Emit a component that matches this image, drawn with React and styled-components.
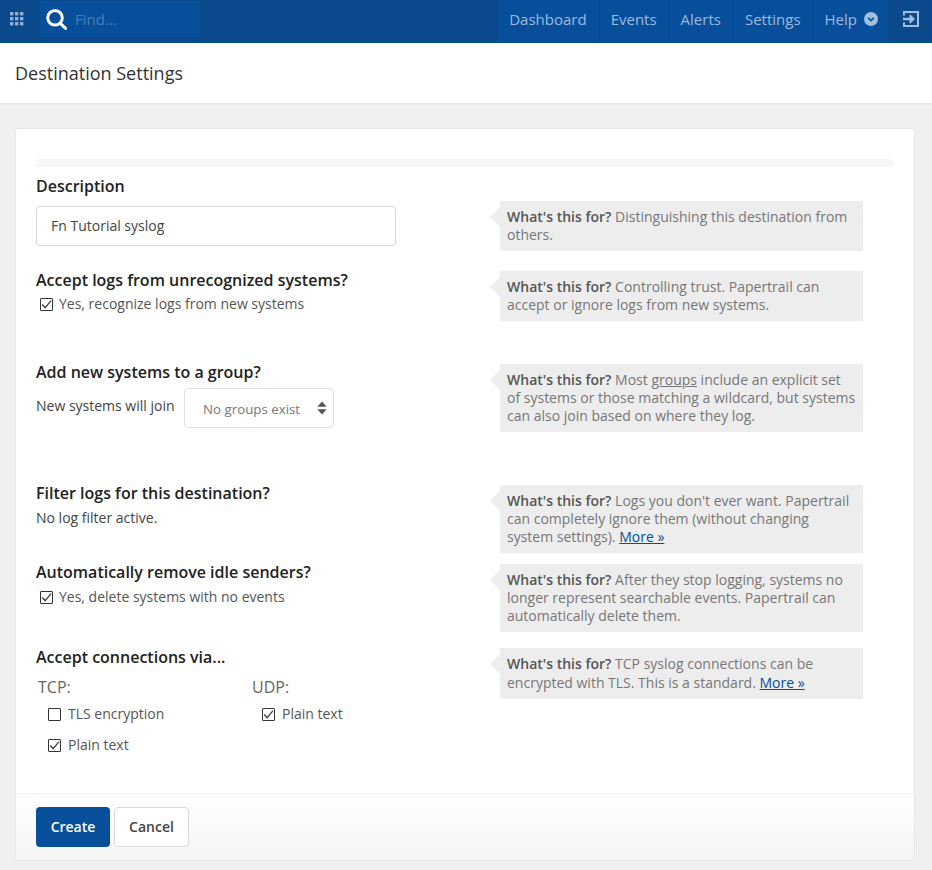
import React from "react";
import styled, { createGlobalStyle } from "styled-components";

const GlobalStyle = createGlobalStyle`
  html, body {
    margin: 0;
    padding: 0;
    background: #f0f0f0;
    font-family: "Open Sans", "Liberation Sans", sans-serif;
    font-size: 14px;
    color: #333;
  }
  * {
    box-sizing: border-box;
  }
`;

const App = () => {
  return (
    <Page>
      <GlobalStyle />
      <TopBar>
        <GridButton aria-label="apps">
          <GridIcon />
        </GridButton>
        <SearchBox>
          <SearchIcon />
          <SearchInput placeholder="Find..." />
        </SearchBox>
        <Spacer />
        <NavList>
          <NavItem>Dashboard</NavItem>
          <NavItem>Events</NavItem>
          <NavItem>Alerts</NavItem>
          <NavItem>Settings</NavItem>
          <NavItem>
            Help
            <HelpIcon />
          </NavItem>
        </NavList>
        <LogoutButton aria-label="log out">
          <LogoutIcon />
        </LogoutButton>
      </TopBar>

      <TitleBar>
        <Title>Destination Settings</Title>
      </TitleBar>

      <Card>
        <CardBody>
          <TopRule />
          <Row $height={94} $hintTop={25}>
            <div>
              <Label>Description</Label>
              <TextInput defaultValue="Fn Tutorial syslog" />
            </div>
            <Hint>
              <b>What's this for?</b> Distinguishing this destination from
              others.
            </Hint>
          </Row>

          <Row $height={92} $hintTop={1}>
            <div>
              <Label>Accept logs from unrecognized systems?</Label>
              <CheckRow>
                <CheckBox>
                  <CheckMark />
                </CheckBox>
                Yes, recognize logs from new systems
              </CheckRow>
            </div>
            <Hint>
              <b>What's this for?</b> Controlling trust. Papertrail can accept
              or ignore logs from new systems.
            </Hint>
          </Row>

          <Row $height={121} $hintTop={2}>
            <div>
              <Label>Add new systems to a group?</Label>
              <JoinRow>
                <span>New systems will join</span>
                <SelectBox>
                  No groups exist
                  <SelectArrows />
                </SelectBox>
              </JoinRow>
            </div>
            <Hint>
              <b>What's this for?</b> Most <GroupLink>groups</GroupLink> include
              an explicit set of systems or those matching a wildcard, but
              systems can also join based on where they log.
            </Hint>
          </Row>

          <Row $height={79} $hintTop={2}>
            <div>
              <Label>Filter logs for this destination?</Label>
              <PlainText>No log filter active.</PlainText>
            </div>
            <Hint>
              <b>What's this for?</b> Logs you don't ever want. Papertrail can
              completely ignore them (without changing system settings).{" "}
              <MoreLink>More »</MoreLink>
            </Hint>
          </Row>

          <Row $height={85} $hintTop={2}>
            <div>
              <Label>Automatically remove idle senders?</Label>
              <CheckRow $top={5}>
                <CheckBox>
                  <CheckMark />
                </CheckBox>
                Yes, delete systems with no events
              </CheckRow>
            </div>
            <Hint>
              <b>What's this for?</b> After they stop logging, systems no longer
              represent searchable events. Papertrail can automatically delete
              them.
            </Hint>
          </Row>

          <Row $height={146} $hintTop={1}>
            <div>
              <Label>Accept connections via...</Label>
              <ProtocolGrid>
                <div>
                  <ProtocolName>TCP:</ProtocolName>
                  <ProtocolOption>
                    <CheckBox />
                    TLS encryption
                  </ProtocolOption>
                  <ProtocolOption>
                    <CheckBox>
                      <CheckMark />
                    </CheckBox>
                    Plain text
                  </ProtocolOption>
                </div>
                <div>
                  <ProtocolName>UDP:</ProtocolName>
                  <ProtocolOption>
                    <CheckBox>
                      <CheckMark />
                    </CheckBox>
                    Plain text
                  </ProtocolOption>
                </div>
              </ProtocolGrid>
            </div>
            <Hint $tall>
              <b>What's this for?</b> TCP syslog connections can be encrypted
              with TLS. This is a standard. <MoreLink>More »</MoreLink>
            </Hint>
          </Row>
        </CardBody>

        <Footer>
          <PrimaryButton>Create</PrimaryButton>
          <SecondaryButton>Cancel</SecondaryButton>
        </Footer>
      </Card>
    </Page>
  );
};

const GridIcon = () => (
  <svg width="14" height="14" viewBox="0 0 14 14" fill="#8fb0d6">
    {[0, 5, 10].map((y) =>
      [0, 5, 10].map((x) => (
        <rect key={`${x}-${y}`} x={x} y={y} width="3.4" height="3.4" />
      ))
    )}
  </svg>
);

const SearchIcon = () => (
  <svg width="21" height="21" viewBox="0 0 21 21" fill="none" stroke="#fff">
    <circle cx="9" cy="8.8" r="7.3" strokeWidth="3" />
    <path d="M14 14.2 L19.6 19.4" strokeWidth="3" strokeLinecap="round" />
  </svg>
);

const HelpIcon = () => (
  <HelpSvg width="14" height="14" viewBox="0 0 14 14">
    <circle cx="7" cy="7" r="7" fill="#a3bedf" />
    <path
      d="M4.2 5.8 L7 8.6 L9.8 5.8"
      fill="none"
      stroke="#0a4f9a"
      strokeWidth="1.8"
    />
  </HelpSvg>
);

const LogoutIcon = () => (
  <svg width="16" height="16" viewBox="0 0 16 16" fill="none" stroke="#a3bedf">
    <path d="M1 4.5 V1 H15 V15 H1 V11.5" strokeWidth="2" />
    <path d="M0 8 H8" strokeWidth="2.4" />
    <path d="M7 3.8 L11.6 8 L7 12.2 Z" fill="#a3bedf" strokeWidth="1" />
  </svg>
);

const SelectArrows = () => (
  <ArrowsSvg width="10" height="14" viewBox="0 0 10 14" fill="#555">
    <path d="M5 0.5 L9.6 5.8 H0.4 Z" />
    <path d="M5 13.5 L9.6 8.2 H0.4 Z" />
  </ArrowsSvg>
);

const CheckMark = () => (
  <svg width="11" height="11" viewBox="0 0 11 11" fill="none" stroke="#444">
    <path d="M1.2 5.4 L4.2 8.6 L10 1.6" strokeWidth="1.4" />
  </svg>
);

const Page = styled.div`
  width: 932px;
  height: 870px;
  overflow: hidden;
`;

const TopBar = styled.header`
  display: flex;
  align-items: stretch;
  height: 43px;
  background: #0a4a8c;
`;

const GridButton = styled.div`
  display: flex;
  align-items: center;
  width: 40px;
  padding: 0 0 6px 10px;
`;

const SearchBox = styled.div`
  display: flex;
  align-items: center;
  width: 160px;
  height: 36px;
  margin-top: 1px;
  padding-left: 6px;
  background: #074f9b;
`;

const SearchInput = styled.input`
  width: 110px;
  margin-left: 8px;
  border: 0;
  outline: 0;
  padding: 0;
  background: transparent;
  font-family: inherit;
  font-size: 15px;
  color: #fff;
  &::placeholder {
    color: #477dba;
    opacity: 1;
  }
`;

const Spacer = styled.div`
  flex: 1;
`;

const NavList = styled.nav`
  display: flex;
  align-items: stretch;
`;

const NavItem = styled.div`
  display: flex;
  align-items: center;
  padding: 0 12px 6px;
  background: #074f9b;
  box-shadow: inset 1px 0 0 #0a4a8c;
  font-size: 15px;
  color: #9dbadd;
`;

const HelpSvg = styled.svg`
  margin: 1px -2px 0 7px;
`;

const LogoutButton = styled.div`
  display: flex;
  align-items: center;
  justify-content: center;
  width: 44px;
  padding: 0 0 6px 2px;
`;

const TitleBar = styled.div`
  display: flex;
  align-items: center;
  height: 60px;
  padding: 0 15px;
  background: #fff;
  box-shadow: 0 1px 2px rgba(0, 0, 0, 0.06);
`;

const Title = styled.h1`
  margin: 0;
  padding-bottom: 1px;
  font-size: 18px;
  font-weight: 400;
  color: #333;
`;

const Card = styled.main`
  width: 900px;
  height: 733px;
  margin: 25px 0 0 15px;
  background: #fff;
  border: 1px solid #e6e6e6;
  border-radius: 3px;
  display: flex;
  flex-direction: column;
`;

const CardBody = styled.div`
  flex: 1;
  padding: 30px 20px 0;
`;

const TopRule = styled.div`
  height: 8px;
  margin-bottom: 9px;
  border-radius: 2px;
  background: #f7f7f7;
`;

const Row = styled.section`
  display: grid;
  grid-template-columns: 464px 363px;
  height: ${(p) => p.$height}px;
  > :last-child {
    margin-top: ${(p) => p.$hintTop}px;
  }
`;

const Label = styled.div`
  height: 20px;
  font-size: 16px;
  line-height: 20px;
  font-weight: 600;
  color: #222;
`;

const TextInput = styled.input`
  display: block;
  width: 360px;
  height: 40px;
  margin-top: 10px;
  padding: 0 14px 2px;
  border: 1px solid #d9d9d9;
  border-radius: 4px;
  outline: 0;
  font-family: inherit;
  font-size: 14px;
  color: #444;
`;

const Hint = styled.aside`
  position: relative;
  align-self: start;
  padding: 7px 7px 7px;
  background: #ededed;
  font-size: 14px;
  line-height: ${(p) => (p.$tall ? 18.6 : 18)}px;
  color: #777;
  b {
    font-weight: 600;
    color: #555;
  }
  &::before {
    content: "";
    position: absolute;
    left: -10px;
    top: 6px;
    border-style: solid;
    border-width: 10px 10px 10px 0;
    border-color: transparent #ededed transparent transparent;
  }
`;

const CheckBox = styled.span`
  display: inline-flex;
  align-items: center;
  justify-content: center;
  flex: none;
  width: 13px;
  height: 13px;
  border: 1px solid #333;
  border-radius: 1px;
  background: #fff;
`;

const CheckLine = styled.div`
  display: flex;
  align-items: center;
  gap: 7px;
  font-size: 14px;
  line-height: 20px;
  color: #555;
`;

const CheckRow = styled(CheckLine)`
  gap: 6px;
  margin: ${(p) => p.$top ?? 4}px 0 0 4px;
`;

const JoinRow = styled.div`
  display: flex;
  align-items: flex-start;
  gap: 9.5px;
  margin-top: 6px;
  line-height: 20px;
  color: #444;
  > span {
    padding-top: 8px;
  }
`;

const SelectBox = styled.div`
  display: flex;
  align-items: center;
  justify-content: space-between;
  width: 150px;
  height: 40px;
  padding: 1px 6px 0 18px;
  border: 1px solid #e2e2e2;
  border-radius: 4px;
  font-size: 13.3px;
  color: #777;
`;

const ArrowsSvg = styled.svg`
  flex: none;
  margin-top: -2px;
`;

const PlainText = styled.div`
  margin-top: 5px;
  line-height: 20px;
  color: #444;
`;

const ProtocolGrid = styled.div`
  display: grid;
  grid-template-columns: 214px 214px;
  margin: 9px 0 0 2px;
`;

const ProtocolName = styled.div`
  font-size: 16px;
  line-height: 22px;
  color: #666;
`;

const ProtocolOption = styled(CheckLine)`
  margin: 6px 0 11px 10px;
`;

const GroupLink = styled.a`
  color: #777;
  text-decoration: underline;
`;

const MoreLink = styled.a`
  color: #074f9b;
  text-decoration: underline;
`;

const Footer = styled.footer`
  display: flex;
  align-items: flex-start;
  gap: 4px;
  height: 67px;
  padding: 13px 20px 0;
  border-top: 1px solid #f0f0f0;
  background: linear-gradient(#fff, #f5f5f5);
`;

const PrimaryButton = styled.button`
  width: 74px;
  height: 40px;
  padding: 0 0 2px;
  border: 0;
  border-radius: 4px;
  background: #074f9b;
  font-family: inherit;
  font-size: 14px;
  font-weight: 600;
  color: #fff;
`;

const SecondaryButton = styled.button`
  width: 75px;
  height: 40px;
  padding: 0 0 2px;
  border: 1px solid #d9d9d9;
  border-radius: 4px;
  background: #fff;
  font-family: inherit;
  font-size: 14px;
  font-weight: 600;
  color: #444;
`;

export default App;
